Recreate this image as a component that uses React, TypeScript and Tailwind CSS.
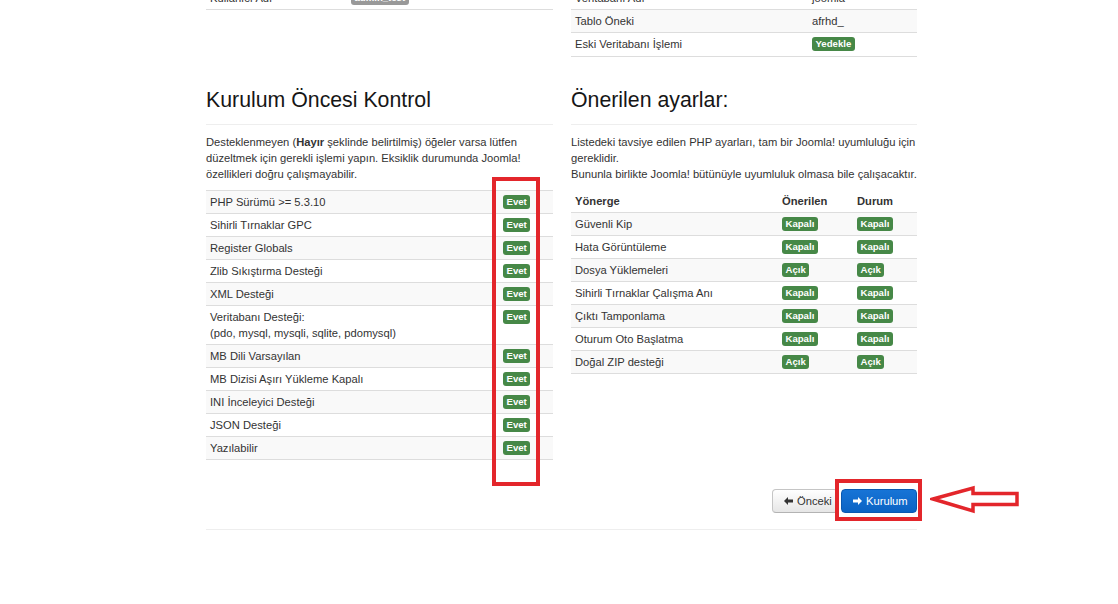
import React from "react";

const Badge = ({ children, gray }: { children: React.ReactNode; gray?: boolean }) => (
  <span
    className={`inline-block rounded-[3px] px-[3.5px] text-[9.6px] font-bold leading-[14px] text-white align-top ${
      gray ? "bg-[#999999]" : "bg-[#468847]"
    }`}
  >
    {children}
  </span>
);

const ArrowLeft = ({ color }: { color: string }) => (
  <svg width="9" height="8" viewBox="0 0 9 8" className="shrink-0">
    <path d="M0 4 L4 0 L4 2.6 L9 2.6 L9 5.4 L4 5.4 L4 8 Z" fill={color} />
  </svg>
);

const ArrowRight = ({ color }: { color: string }) => (
  <svg width="9" height="8" viewBox="0 0 9 8" className="shrink-0">
    <path d="M9 4 L5 0 L5 2.6 L0 2.6 L0 5.4 L5 5.4 L5 8 Z" fill={color} />
  </svg>
);

const preChecks: { label: React.ReactNode }[] = [
  { label: "PHP Sürümü >= 5.3.10" },
  { label: "Sihirli Tırnaklar GPC" },
  { label: "Register Globals" },
  { label: "Zlib Sıkıştırma Desteği" },
  { label: "XML Desteği" },
  {
    label: (
      <>
        Veritabanı Desteği:
        <br />
        (pdo, mysql, mysqli, sqlite, pdomysql)
      </>
    ),
  },
  { label: "MB Dili Varsayılan" },
  { label: "MB Dizisi Aşırı Yükleme Kapalı" },
  { label: "INI İnceleyici Desteği" },
  { label: "JSON Desteği" },
  { label: "Yazılabilir" },
];

const settings: [string, string, string][] = [
  ["Güvenli Kip", "Kapalı", "Kapalı"],
  ["Hata Görüntüleme", "Kapalı", "Kapalı"],
  ["Dosya Yüklemeleri", "Açık", "Açık"],
  ["Sihirli Tırnaklar Çalışma Anı", "Kapalı", "Kapalı"],
  ["Çıktı Tamponlama", "Kapalı", "Kapalı"],
  ["Oturum Oto Başlatma", "Kapalı", "Kapalı"],
  ["Doğal ZIP desteği", "Açık", "Açık"],
];

export default function App() {
  return (
    <div className="relative h-[604px] w-full overflow-hidden bg-white font-['Liberation_Sans',Arial,sans-serif] text-[11.2px] text-[#333333]">
      <div className="ml-[206px] w-[711px]">
        {/* top (cut-off) section */}
        <div className="-mt-[14px] grid grid-cols-[347px_346px] gap-x-[18px] items-start">
          <div className="border-b border-[#dddddd]">
            <div className="flex border-t border-[#dddddd]">
              <div className="w-[141px] px-[4px] py-[3px] leading-[16px]">Kullanıcı Adı</div>
              <div className="flex-1 px-[4px] pt-[4px] leading-[14px]">
                <Badge gray>admin_test</Badge>
              </div>
            </div>
          </div>
          <div className="border-b border-[#dddddd]">
            {[
              ["Veritabanı Adı", "joomla", false],
              ["Tablo Öneki", "afrhd_", true],
              ["Eski Veritabanı İşlemi", "Yedekle", false],
            ].map(([l, v, odd], i) => (
              <div
                key={i}
                className={`flex border-t border-[#dddddd] ${odd ? "bg-[#f9f9f9]" : ""}`}
              >
                <div className="w-[237px] px-[4px] py-[3px] leading-[16px]">{l as string}</div>
                <div className="flex-1 px-[4px] py-[3px] leading-[16px]">
                  {i === 2 ? (
                    <span className="inline-block pt-[1px]">
                      <Badge>{v as string}</Badge>
                    </span>
                  ) : (
                    (v as string)
                  )}
                </div>
              </div>
            ))}
          </div>
        </div>

        {/* main section */}
        <div className="mt-[29px] grid grid-cols-[347px_346px] gap-x-[18px] items-start">
          {/* left column */}
          <div className="flex flex-col">
            <h3 className="border-b border-[#eeeeee] pb-[10px] text-[21.3px] leading-[28px] text-[#161616]">
              Kurulum Öncesi Kontrol
            </h3>
            <p className="mt-[9px] whitespace-nowrap leading-[16px]">
              Desteklenmeyen (<b>Hayır</b> şeklinde belirtilmiş) öğeler varsa lütfen
              <br />
              düzeltmek için gerekli işlemi yapın. Eksiklik durumunda Joomla!
              <br />
              özellikleri doğru çalışmayabilir.
            </p>
            <div className="mt-[8px] border-b border-[#dddddd]">
              {preChecks.map((r, i) => (
                <div
                  key={i}
                  className={`flex border-t border-[#dddddd] ${i % 2 === 0 ? "bg-[#f9f9f9]" : ""}`}
                >
                  <div className="flex-1 px-[4px] py-[3px] leading-[16px]">{r.label}</div>
                  <div className="w-[55px] pl-[5px] pt-[4px] leading-[14px]">
                    <Badge>Evet</Badge>
                  </div>
                </div>
              ))}
            </div>
          </div>

          {/* right column */}
          <div className="flex flex-col">
            <h3 className="border-b border-[#eeeeee] pb-[10px] text-[21.3px] leading-[28px] text-[#161616]">
              Önerilen ayarlar:
            </h3>
            <p className="mt-[9px] whitespace-nowrap leading-[16px]">
              Listedeki tavsiye edilen PHP ayarları, tam bir Joomla! uyumluluğu için
              <br />
              gereklidir.
              <br />
              Bununla birlikte Joomla! bütünüyle uyumluluk olmasa bile çalışacaktır.
            </p>
            <div className="mt-[8px] border-b border-[#dddddd]">
              <div className="flex font-bold">
                <div className="w-[207px] px-[4px] py-[3px] leading-[16px]">Yönerge</div>
                <div className="w-[75px] px-[4px] py-[3px] leading-[16px]">Önerilen</div>
                <div className="w-[64px] px-[4px] py-[3px] leading-[16px]">Durum</div>
              </div>
              {settings.map(([l, a, b], i) => (
                <div
                  key={i}
                  className={`flex border-t border-[#dddddd] ${i % 2 === 0 ? "bg-[#f9f9f9]" : ""}`}
                >
                  <div className="w-[207px] px-[4px] py-[3px] leading-[16px]">{l}</div>
                  <div className="w-[75px] px-[4px] pt-[4px] leading-[14px]">
                    <Badge>{a}</Badge>
                  </div>
                  <div className="w-[64px] px-[4px] pt-[4px] leading-[14px]">
                    <Badge>{b}</Badge>
                  </div>
                </div>
              ))}
            </div>
          </div>
        </div>

        {/* buttons */}
        <div className="mt-[29px] flex justify-end gap-[3px]">
          <button className="flex h-[24px] w-[66px] items-center gap-[4px] rounded-[4px] border border-[#c5c5c5] border-b-[#b3b3b3] bg-gradient-to-b from-white to-[#e6e6e6] pl-[11px] text-[11.2px] text-[#333333]">
            <ArrowLeft color="#333333" />
            <span>Önceki</span>
          </button>
          <button className="flex h-[24px] w-[76px] items-center gap-[4px] rounded-[4px] border border-[#0a58b0] bg-gradient-to-b from-[#1774d6] to-[#0b63c4] pl-[11px] text-[11.2px] text-white">
            <ArrowRight color="#ffffff" />
            <span>Kurulum</span>
          </button>
        </div>

        <div className="mt-[16px] border-t border-[#eeeeee]" />
      </div>

      {/* annotations */}
      <div className="pointer-events-none absolute left-[492px] top-[177px] h-[309px] w-[48px] border-[4px] border-[#e3262b]" />
      <div className="pointer-events-none absolute left-[835px] top-[479px] h-[42px] w-[87px] border-[4px] border-[#e3262b]" />
      <svg
        className="pointer-events-none absolute left-[930px] top-[484px]"
        width="92"
        height="32"
        viewBox="0 0 92 32"
      >
        <path
          d="M3 15 L43 4 L43 9.5 L87 9.5 L87 20.5 L43 20.5 L43 27 Z"
          fill="none"
          stroke="#e3262b"
          strokeWidth="3.5"
          strokeLinejoin="miter"
        />
      </svg>
    </div>
  );
}
